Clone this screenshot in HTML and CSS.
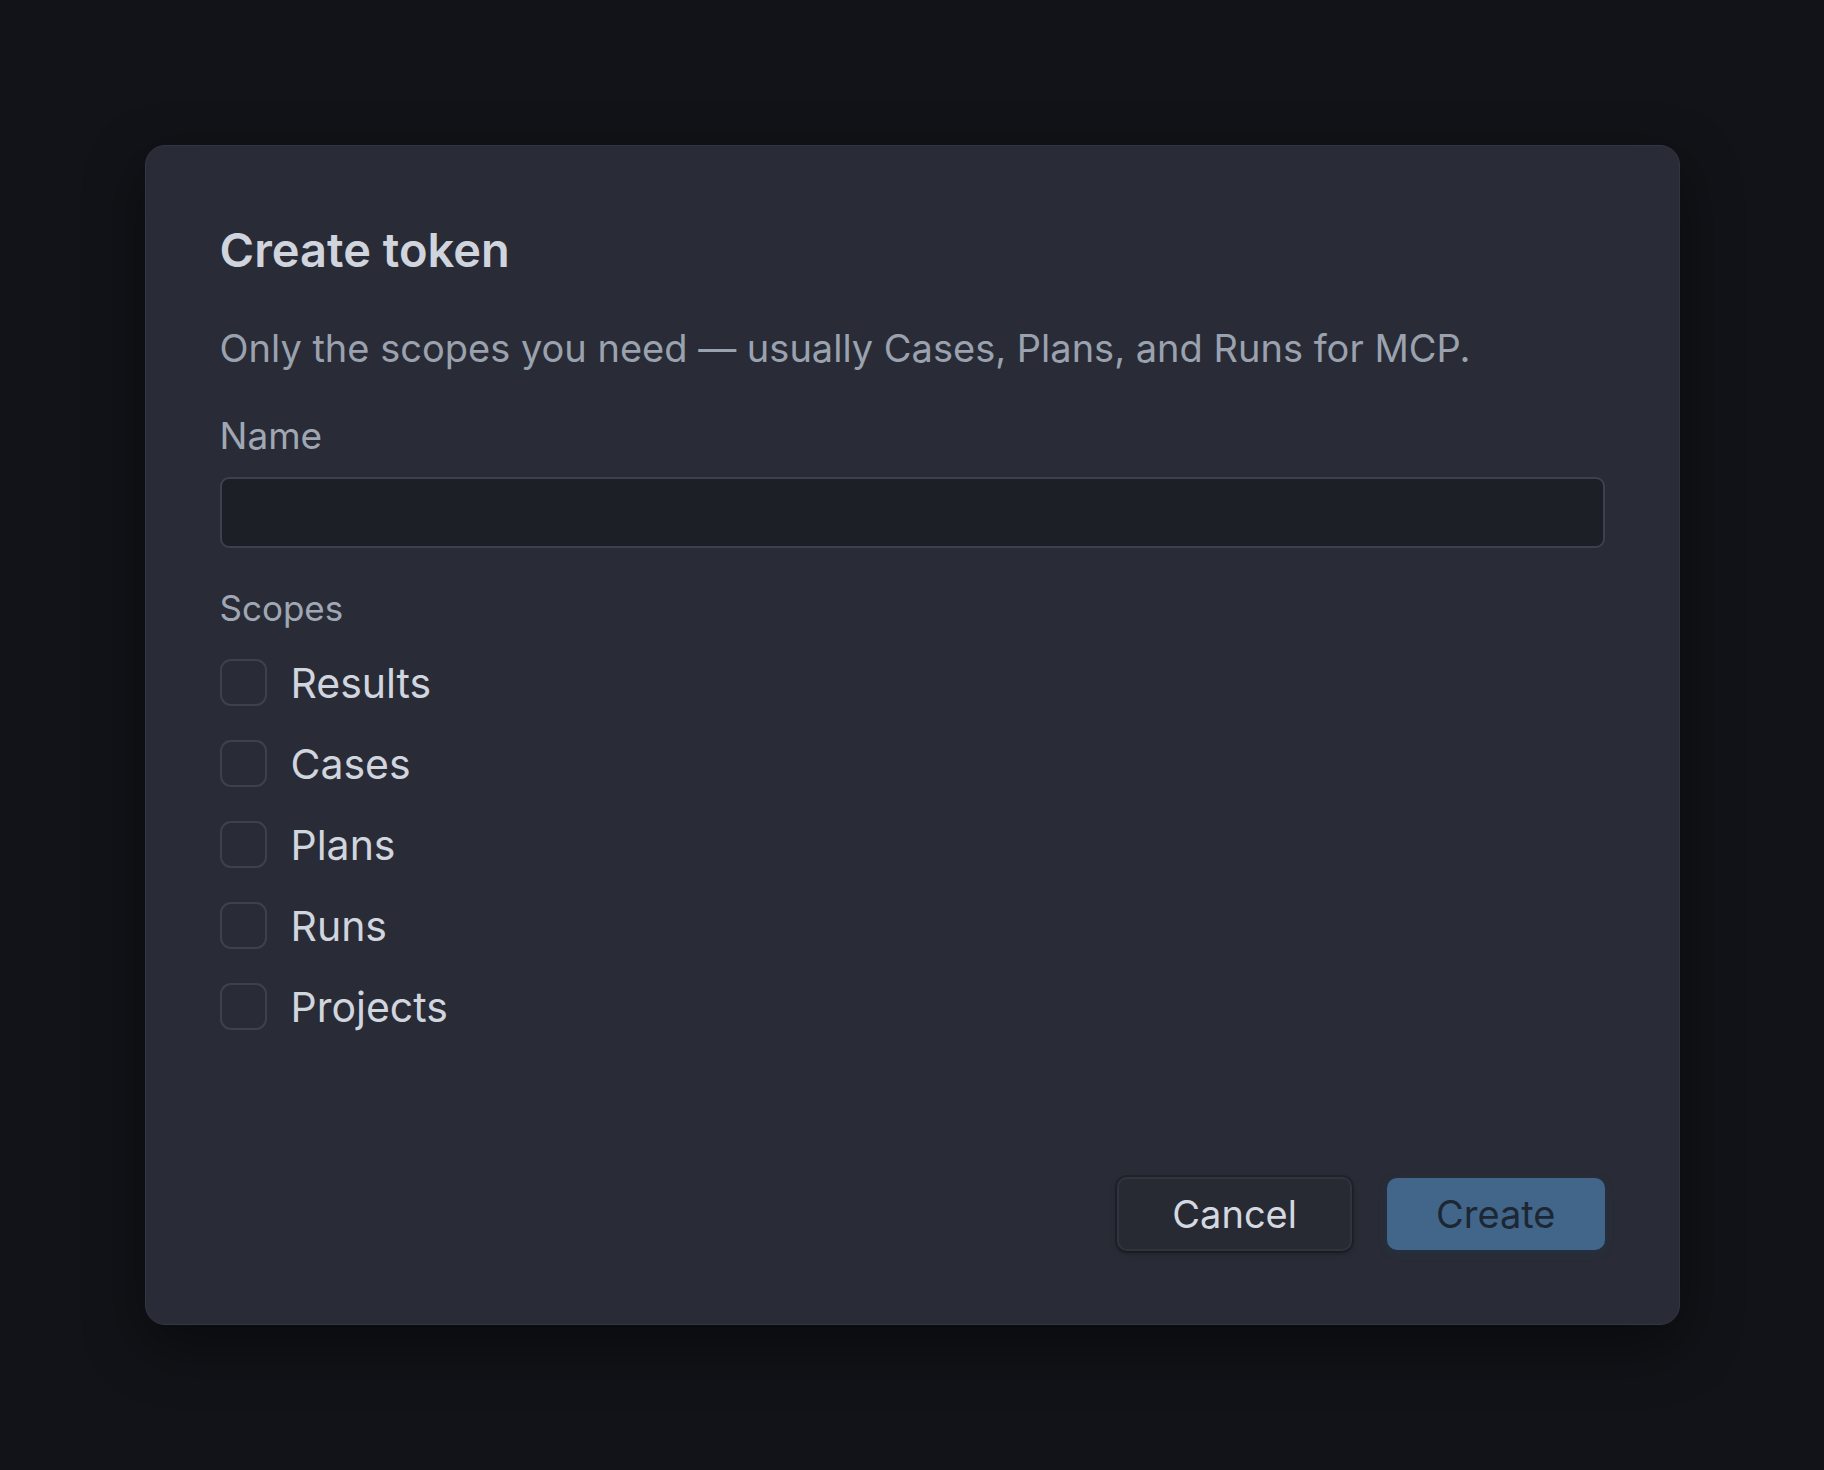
FILE: index.html
```html
<!DOCTYPE html>
<html lang="en">
<head>
<meta charset="utf-8">
<title>Create token</title>
<link rel="stylesheet" href="styles.css">
</head>
<body>
<div class="backdrop">
  <div class="modal" role="dialog" aria-labelledby="dlg-title">
    <h2 class="modal-title" id="dlg-title">Create token</h2>
    <p class="modal-desc">Only the scopes you need — usually Cases, Plans, and Runs for MCP.</p>
    <label class="field-label" for="token-name">Name</label>
    <input class="text-input" id="token-name" type="text">
    <div class="scopes-label">Scopes</div>
    <div class="scope-list">
      <label class="scope-row"><span class="checkbox"></span><span class="scope-text">Results</span></label>
      <label class="scope-row"><span class="checkbox"></span><span class="scope-text">Cases</span></label>
      <label class="scope-row"><span class="checkbox"></span><span class="scope-text">Plans</span></label>
      <label class="scope-row"><span class="checkbox"></span><span class="scope-text">Runs</span></label>
      <label class="scope-row"><span class="checkbox"></span><span class="scope-text">Projects</span></label>
    </div>
    <div class="modal-footer">
      <button class="btn btn-secondary" type="button">Cancel</button>
      <button class="btn btn-primary" type="button">Create</button>
    </div>
  </div>
</div>
</body>
</html>
```

FILE: styles.css
```css
* { box-sizing: border-box; }

html, body {
  margin: 0;
  padding: 0;
  background: #111318;
  font-family: Inter, "Noto Sans", "Liberation Sans", sans-serif;
}

.backdrop {
  width: 100vw;
  height: 100vh;
  display: flex;
  align-items: center;
  justify-content: center;
}

.modal {
  width: 1535px;
  display: flex;
  flex-direction: column;
  padding: 76px 74px 73px 74px;
  background: #292c36;
  border: 1px solid #323641;
  border-radius: 20px;
  box-shadow: 0 20px 60px rgba(0, 0, 0, 0.45);
}

.modal-title {
  margin: 0;
  font-size: 47px;
  line-height: 56px;
  font-weight: 600;
  color: #d0d4dd;
}

.modal-desc {
  margin: 47px 0 0;
  font-size: 38px;
  line-height: 46px;
  color: #9ba2af;
}

.field-label {
  margin-top: 42px;
  font-size: 37px;
  line-height: 45px;
  color: #a0a7b4;
}

.text-input {
  margin-top: 19px;
  height: 71px;
  width: 100%;
  background: #1c1f26;
  border: 2px solid #3c414d;
  border-radius: 9px;
  outline: none;
  font-family: inherit;
  font-size: 36px;
  color: #d0d4dd;
  padding: 0 20px;
}

.scopes-label {
  margin-top: 39px;
  font-size: 35px;
  line-height: 42px;
  color: #a0a7b4;
}

.scope-list {
  margin-top: 30px;
  display: flex;
  flex-direction: column;
  gap: 34px;
}

.scope-row {
  display: flex;
  align-items: center;
  gap: 24px;
  height: 47px;
}

.checkbox {
  width: 47px;
  height: 47px;
  flex: none;
  border: 2px solid #3c414e;
  border-radius: 11px;
}

.scope-text {
  font-size: 41px;
  line-height: 48px;
  color: #d0d5de;
}

.modal-footer {
  margin-top: 147px;
  display: flex;
  justify-content: flex-end;
  align-items: center;
  gap: 35px;
}

.btn {
  font-family: inherit;
  font-size: 38px;
  line-height: 46px;
  border-radius: 10px;
  cursor: pointer;
}

.btn-secondary {
  height: 74px;
  padding: 0 53px;
  background: #272a33;
  border: 2px solid #30343e;
  color: #d4d8e0;
  box-shadow: 0 2px 6px rgba(0, 0, 0, 0.35), 0 0 0 2px rgba(30, 33, 40, 0.6);
}

.btn-primary {
  height: 72px;
  padding: 0 49px;
  background: #41668a;
  border: none;
  color: #1d2633;
  box-shadow: 0 3px 8px rgba(30, 60, 90, 0.35);
}
```
